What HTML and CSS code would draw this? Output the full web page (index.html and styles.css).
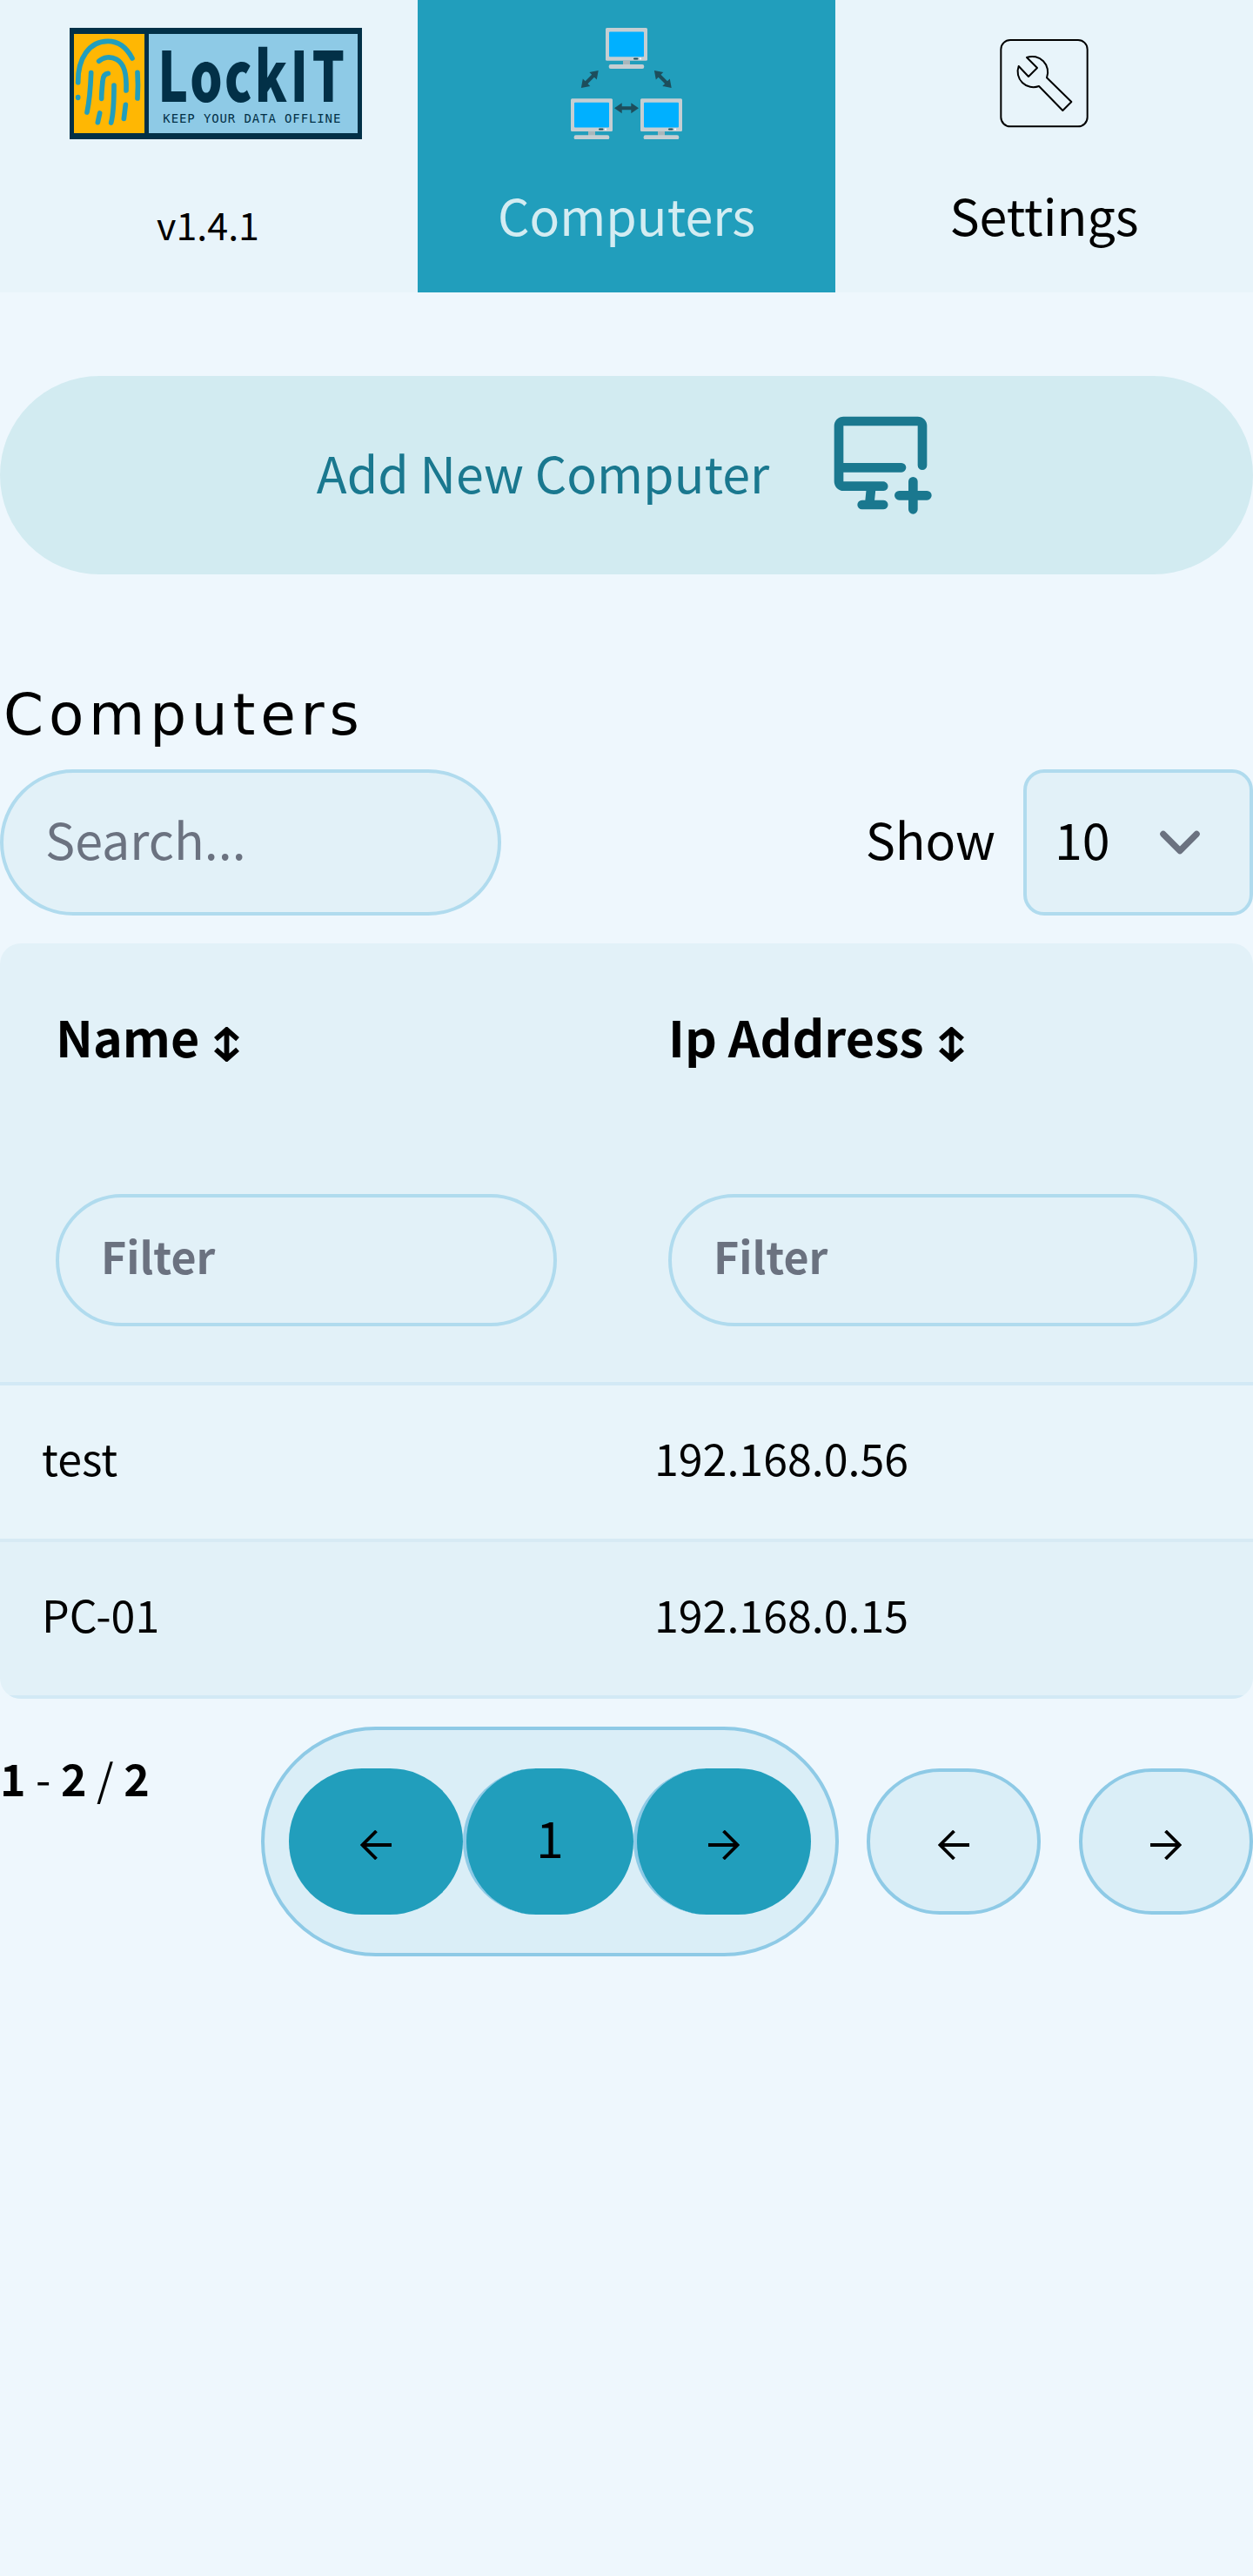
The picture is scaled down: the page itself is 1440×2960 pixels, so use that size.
FILE: index.html
```html
<!DOCTYPE html>
<html lang="en">
<head>
<meta charset="utf-8">
<title>LockIT</title>
<link rel="stylesheet" href="styles.css">
</head>
<body>
<nav class="nav">
  <div class="nav-item">
    <svg class="logo" viewBox="60 66 1008 384" aria-label="LockIT">
      <rect x="60" y="66" width="1008" height="384" fill="#023047"/>
      <rect x="75" y="87" width="243" height="342" fill="#ffb703"/>
      <rect x="333" y="87" width="720" height="342" fill="#8ecae6"/>
      <g class="print">
        <path d="M89 254C88 170 128 112 192 112C232 112 260 140 276 171"/>
        <path d="M161 181C176 166 201 163 222 175C248 190 257 222 255 282"/>
        <path d="M170 310C170 290 172 270 174 250C175 232 182 224 193 223"/>
        <path d="M134 221C132 275 128 320 120 357"/>
        <path d="M213 264C213 320 212 360 203 393"/>
        <path d="M294 220C296 250 296 280 294 309M89 305v2M164 360L157 392M253 331L247 379"/>
      </g>
      <text class="logo-name" transform="translate(0 321) scale(.74 1)" x="492 642 803 944 1109 1210">LockIT</text>
      <text class="logo-tag" x="382" y="393" textLength="612" lengthAdjust="spacing">KEEP YOUR DATA OFFLINE</text>
    </svg>
    <span class="version">v1.4.1</span>
  </div>
  <div class="nav-item active">
    <svg class="net" viewBox="0 0 128 128">
      <defs>
        <g id="pc">
          <rect width="48" height="37.7" rx="1.5" fill="#c5ced2"/>
          <rect x="4" y="4.6" width="40" height="28.6" rx="1" fill="#00b0ff"/>
          <rect x="32" y="34.4" width="5.5" height="2" rx="1" fill="#1d4e5c"/>
          <circle cx="40" cy="35.4" r="1.1" fill="#fff"/>
          <rect x="20" y="37.7" width="8" height="5" fill="#a9b6bb"/>
          <rect x="3.7" y="42" width="40.5" height="5" rx="2" fill="#c5ced2"/>
        </g>
        <path id="both" d="M-14 0L-5.3-6V-2H5.3V-6L14 0L5.3 6V2H-5.3V6Z" fill="#1d4e5c"/>
      </defs>
      <use href="#pc" x="40"/>
      <use href="#pc" y="81.2"/>
      <use href="#pc" x="80" y="81.2"/>
      <use href="#both" x="64" y="92.3"/>
      <use href="#both" transform="translate(21.8 59) rotate(-45)"/>
      <use href="#both" transform="translate(105.8 59) rotate(45)"/>
    </svg>
    <span>Computers</span>
  </div>
  <div class="nav-item">
    <svg class="tool" viewBox="228 36 384 384">
      <rect x="271" y="78" width="298" height="298" rx="32"/>
      <path d="M360 138A54 54 0 0 1 429 208L514 291L484 321L402 237A54 54 0 0 1 332 168L366 204L396 174Z"/>
    </svg>
    <span>Settings</span>
  </div>
</nav>
<button class="add">
  <span>Add New Computer</span>
  <svg viewBox="0 0 24 24"><path d="M12.6 17H4a1 1 0 0 1-1-1V4a1 1 0 0 1 1-1h16a1 1 0 0 1 1 1v8.5M3 13h13.5M8 21h4.6M10 17l-.4 4M16 19h6M19 16v6"/></svg>
</button>
<main>
  <h1>Computers</h1>
  <div class="toolbar">
    <input class="field search" placeholder="Search...">
    <div class="show">
      <span>Show</span>
      <button class="field select"><span>10</span><svg viewBox="0 0 20 20"><path d="M6 8l4 4 4-4"/></svg></button>
    </div>
  </div>
  <div class="table">
    <div class="row head">
      <div class="cell"><div class="label">Name <svg viewBox="0 0 30 40"><path d="M15 3V37M2 14L15 2.5L28 14M2 26L15 37.5L28 26"/></svg></div><input class="field filter" placeholder="Filter"></div>
      <div class="cell"><div class="label">Ip Address <svg viewBox="0 0 30 40"><path d="M15 3V37M2 14L15 2.5L28 14M2 26L15 37.5L28 26"/></svg></div><input class="field filter" placeholder="Filter"></div>
    </div>
    <div class="row"><div class="cell">test</div><div class="cell">192.168.0.56</div></div>
    <div class="row"><div class="cell">PC-01</div><div class="cell">192.168.0.15</div></div>
  </div>
  <div class="footer">
    <div class="info"><b>1</b> - <b>2</b> / <b>2</b></div>
    <div class="pager">
      <div class="group">
        <button><svg viewBox="0 0 36 34"><path d="M36 17H3M18.500 1L2.500 17L18.500 33"/></svg></button>
        <button class="page">1</button>
        <button><svg viewBox="0 0 36 34"><path d="M0 17H33M17.500 1L33.500 17L17.500 33"/></svg></button>
      </div>
      <button class="step"><svg viewBox="0 0 36 34"><path d="M36 17H3M18.500 1L2.500 17L18.500 33"/></svg></button>
      <button class="step last"><svg viewBox="0 0 36 34"><path d="M0 17H33M17.500 1L33.500 17L17.500 33"/></svg></button>
    </div>
  </div>
</main>
</body>
</html>
```
FILE: styles.css
```css
* { box-sizing: border-box; }
body {
  margin: 0;
  min-height: 2960px;
  background: #eef7fd;
  color: #000;
  font: 57.3px/96px "Noto Sans CJK JP", "Noto Sans", sans-serif;
}
button, input { font: inherit; color: inherit; margin: 0; border: 0; padding: 0; }
svg { display: block; flex: none; fill: none; }

.nav { display: grid; grid-template-columns: repeat(3, 1fr); height: 336px; background: #e8f4fa; }
.nav-item { display: flex; flex-direction: column; align-items: center; padding-top: 32px; gap: 39px; }
.nav-item.active { background: #219ebc; color: #d3ecf2; }
.version { font-size: 43px; padding-top: 10px; margin-left: -2px; }
.logo { width: 336px; height: 128px; margin-left: 16px; overflow: visible; }
.print { stroke: #219ebc; stroke-width: 17; stroke-linecap: round; }
.logo-name { font-size: 238px; font-weight: 900; fill: #023047; }
.logo-tag { font: 42px "DejaVu Sans Mono", monospace; fill: #023047; }
.net, .tool { width: 128px; height: 128px; }
.tool { stroke: #000; stroke-width: 6; stroke-linejoin: round; }

.add {
  display: flex;
  justify-content: center;
  width: 100%;
  height: 228px;
  margin-top: 96px;
  padding-top: 36px;
  gap: 64px;
  border-radius: 114px;
  background: #d2ebf1;
  color: #1a788f;
}
.add span { padding-top: 27px; }
.add svg { width: 128px; height: 128px; stroke: currentColor; stroke-width: 2; stroke-linecap: round; stroke-linejoin: round; }

h1 {
  margin: 106px 0 6px 4px;
  font: 66px/112px "DejaVu Sans", sans-serif;
  letter-spacing: 5.8px;
}
.toolbar { display: flex; justify-content: space-between; }
.field { height: 168px; border: 4px solid #b0dbee; border-radius: 84px; background: #e2f1f8; outline: 0; }
.field::placeholder { color: #6b7280; opacity: 1; }
.search { width: 576px; padding: 0 48px 10px; }
.show { display: flex; align-items: center; gap: 32px; }
.show > span, .select span { padding-bottom: 9px; }
.select { width: 264px; border-radius: 24px; padding: 0 32px; display: flex; align-items: center; justify-content: space-between; }
.select svg { width: 96px; height: 96px; stroke: #6b7280; stroke-width: 1.5; stroke-linecap: round; stroke-linejoin: round; }

.table { margin-top: 32px; border-radius: 24px; overflow: hidden; }
.row { display: grid; grid-template-columns: 704px 1fr; height: 180px; border-bottom: 4px solid #d2e9f5; background: #e2f1f8; font-size: 50.1px; }
.row:nth-child(2) { background: #e8f4fa; border-color: #d7eaf4; }
.cell { display: flex; align-items: center; padding: 0 48px 12px; }
.head { height: 508px; font-weight: 700; }
.head .cell { display: block; padding: 59px 64px 0; }
.label { display: flex; gap: 17px; font-size: 57.3px; }
.label svg { width: 29px; height: 40px; margin-top: 37px; stroke: #000; stroke-width: 6; }
.filter { display: block; width: 100%; height: 152px; margin-top: 133px; padding: 0 48px 12px; }

.footer { display: flex; justify-content: space-between; padding-top: 32px; }
.info { font-size: 50.1px; padding-top: 10px; word-spacing: 0.3px; }
.pager { display: flex; align-items: center; }
.group { display: flex; padding: 44px 28px; border: 4px solid #8ecae6; border-radius: 132px; background: #daeef7; margin-right: 32px; }
.pager button { display: flex; align-items: center; justify-content: center; width: 200px; height: 168px; border-radius: 84px; }
.group button { background: #219ebc; }
.group button + button { border-left: 4px solid #8ecae6; width: 204px; }
.group .page.page { width: 196px; padding-bottom: 10px; }
.pager svg { width: 36px; height: 34px; margin-top: 8px; stroke: #000; stroke-width: 3.8; }
.step { border: 4px solid #8ecae6; background: #daeef7; }
.pager .last { margin-left: 44px; }
```
